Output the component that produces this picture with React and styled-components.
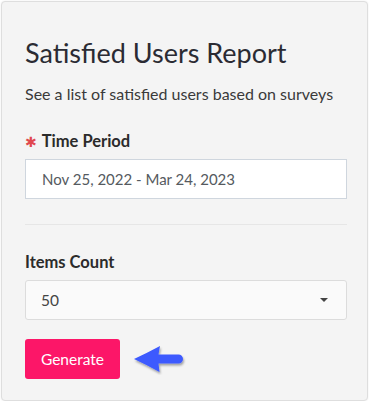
import React from 'react'
import styled, { createGlobalStyle } from 'styled-components'

const GlobalStyle = createGlobalStyle`
  html, body {
    margin: 0;
    padding: 0;
    background: #ffffff;
  }
  body {
    font-family: Lato, "Open Sans", sans-serif;
  }
`

function App() {
  return (
    <>
      <GlobalStyle />
      <Card>
        <Title>Satisfied Users Report</Title>
        <Subtitle>See a list of satisfied users based on surveys</Subtitle>

        <Field>
          <Label><Required>✱</Required>Time Period</Label>
          <Input>Nov 25, 2022 - Mar 24, 2023</Input>
        </Field>

        <Divider />

        <Field>
          <Label>Items Count</Label>
          <Select>
            <span>50</span>
            <Caret />
          </Select>
        </Field>

        <Actions>
          <Button>Generate</Button>
          <svg width="54" height="32" viewBox="0 0 54 32">
            <defs>
              <filter id="sh" x="-20%" y="-30%" width="150%" height="170%">
                <feDropShadow dx="1" dy="2" stdDeviation="1.2" floodColor="#000" floodOpacity="0.35" />
              </filter>
            </defs>
            <path
              d="M2 16 Q15 10 28 3 L26.5 11.5 L46.5 11.5 A4.5 4.5 0 0 1 46.5 20.5 L26.5 20.5 L27.5 29 Q15 22 2 16 Z"
              fill="#3d5afe"
              filter="url(#sh)"
            />
          </svg>
        </Actions>
      </Card>
    </>
  )
}

const Card = styled.div`
  box-sizing: border-box;
  width: 367px;
  height: 400px;
  margin: 1px 0 0 1px;
  background: #f4f4f4;
  border: 1px solid #dedede;
  border-radius: 4px;
  box-shadow: 0 0 2px rgba(0, 0, 0, 0.08);
  padding: 33px 23px 0 23px;
  display: flex;
  flex-direction: column;
`

const Title = styled.h1`
  margin: 0;
  font-size: 27px;
  font-weight: 400;
  line-height: 36px;
  color: #2b2b33;
`

const Subtitle = styled.p`
  margin: 13px 0 0 0;
  font-size: 16px;
  line-height: 20px;
  color: #3a3a3a;
`

const Field = styled.div`
  display: flex;
  flex-direction: column;
  gap: 8px;
  margin-top: 27px;
`

const Label = styled.label`
  font-size: 16.5px;
  font-weight: 700;
  line-height: 20px;
  color: #2b2b2b;
  display: flex;
  align-items: center;
`

const Required = styled.span`
  color: #e0484f;
  font-family: "DejaVu Sans", sans-serif;
  font-size: 14px;
  margin-right: 5px;
  line-height: 1;
  position: relative;
  top: 1px;
`

const Input = styled.div`
  box-sizing: border-box;
  height: 40px;
  width: 322px;
  background: #ffffff;
  border: 1px solid #cfd6de;
  padding: 0 16px;
  display: flex;
  align-items: center;
  font-size: 15px;
  color: #555a60;
`

const Divider = styled.hr`
  width: 322px;
  margin: 25px 0 0 0;
  border: none;
  border-top: 1px solid #e6e6e6;
`

const Select = styled.div`
  box-sizing: border-box;
  height: 40px;
  width: 322px;
  background: #fafafa;
  border: 1px solid #dcdcdc;
  border-radius: 3px;
  padding: 0 15px;
  display: flex;
  align-items: center;
  justify-content: space-between;
  font-size: 15.5px;
  color: #444;
`

const Caret = styled.span`
  width: 0;
  height: 0;
  border-left: 4px solid transparent;
  border-right: 4px solid transparent;
  border-top: 4px solid #444;
  margin-right: 3px;
`

const Actions = styled.div`
  display: flex;
  align-items: center;
  gap: 12px;
  margin-top: 19px;
`

const Button = styled.button`
  box-sizing: border-box;
  height: 40px;
  width: 95px;
  background: #fc1668;
  border: none;
  border-radius: 3px;
  color: #ffffff;
  font-family: Lato, "Open Sans", sans-serif;
  font-size: 15.5px;
  padding: 0;
`

export default App
